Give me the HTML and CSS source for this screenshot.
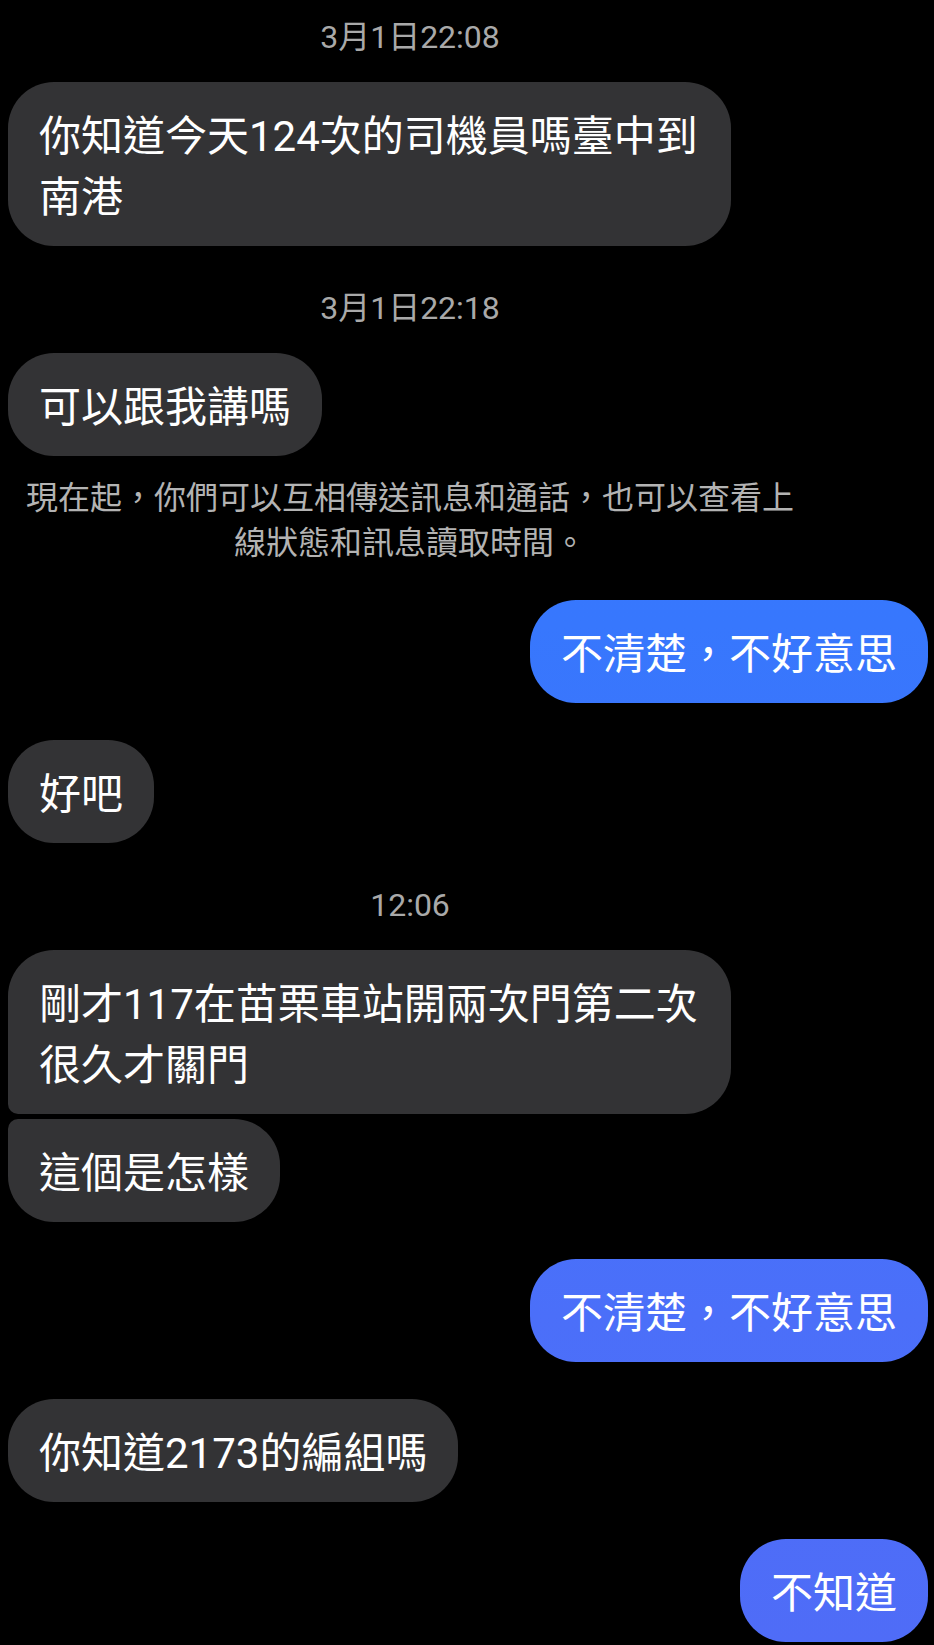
FILE: index.html
```html
<!DOCTYPE html>
<html lang="zh-Hant">
  <head>
    <meta charset="UTF-8" />
    <meta name="viewport" content="width=device-width, initial-scale=1.0" />
    <title>Messenger</title>

    <link rel="stylesheet" href="styles.css">
  </head>
  <body>
    <div class="thread">
      <div class="stamp">3月1日22:08</div>
      <div class="row in">
        <div class="bubble">你知道今天124次的司機員嗎臺中到南港</div>
      </div>

      <div class="stamp">3月1日22:18</div>
      <div class="row in">
        <div class="bubble">可以跟我講嗎</div>
      </div>

      <div class="notice">
        <p>現在起，你們可以互相傳送訊息和通話，也可以查看上線狀態和訊息讀取時間。</p>
      </div>

      <div class="row out">
        <div class="bubble">不清楚，不好意思</div>
      </div>

      <div class="row in">
        <div class="bubble">好吧</div>
      </div>

      <div class="stamp">12:06</div>
      <div class="row in">
        <div class="bubble first">剛才117在苗栗車站開兩次門第二次很久才關門</div>
      </div>
      <div class="row in cont">
        <div class="bubble last">這個是怎樣</div>
      </div>

      <div class="row out">
        <div class="bubble">不清楚，不好意思</div>
      </div>

      <div class="row in">
        <div class="bubble">你知道2173的編組嗎</div>
      </div>

      <div class="row out">
        <div class="bubble">不知道</div>
      </div>
    </div>
  </body>
</html>
```

FILE: styles.css
```css
html,
body {
  margin: 0;
  background: #000;
}

body {
  font-family: "Roboto", "Noto Sans CJK TC", sans-serif;
  color: #fff;
  padding-top: 17px;
}

.thread {
  display: flex;
  flex-direction: column;
  width: 934px;
}

.stamp {
  width: 820px;
  text-align: center;
  font-size: 32px;
  line-height: 40px;
  color: #a9a9a9;
  margin-top: 42px;
}

.stamp:first-child {
  margin-top: 0;
}

.row {
  display: flex;
  margin-top: 37px;
}

.stamp + .row {
  margin-top: 25px;
}

.row.cont {
  margin-top: 5px;
}

.row.in {
  justify-content: flex-start;
  padding-left: 8px;
}

.row.out {
  justify-content: flex-end;
  padding-right: 6px;
}

.bubble {
  box-sizing: border-box;
  max-width: 723px;
  padding: 24px 31px 18px;
  font-size: 42px;
  line-height: 61px;
  border-radius: 46px;
  background: #333335;
}

.row.in .bubble.first {
  border-bottom-left-radius: 10px;
}

.row.in .bubble.last {
  border-top-left-radius: 10px;
}

.row.out .bubble {
  background: linear-gradient(180deg, #3479ff 0%, #3777fd 38%, #4b6ff9 80%, #4f6cf7 100%) fixed;
}

.notice {
  width: 820px;
  margin-top: 20px;
}

.notice + .row {
  margin-top: 34px;
}

.notice p {
  max-width: 784px;
  margin: 0 auto;
  text-align: center;
  font-size: 32px;
  line-height: 45px;
  color: #b3b3b3;
}
```
